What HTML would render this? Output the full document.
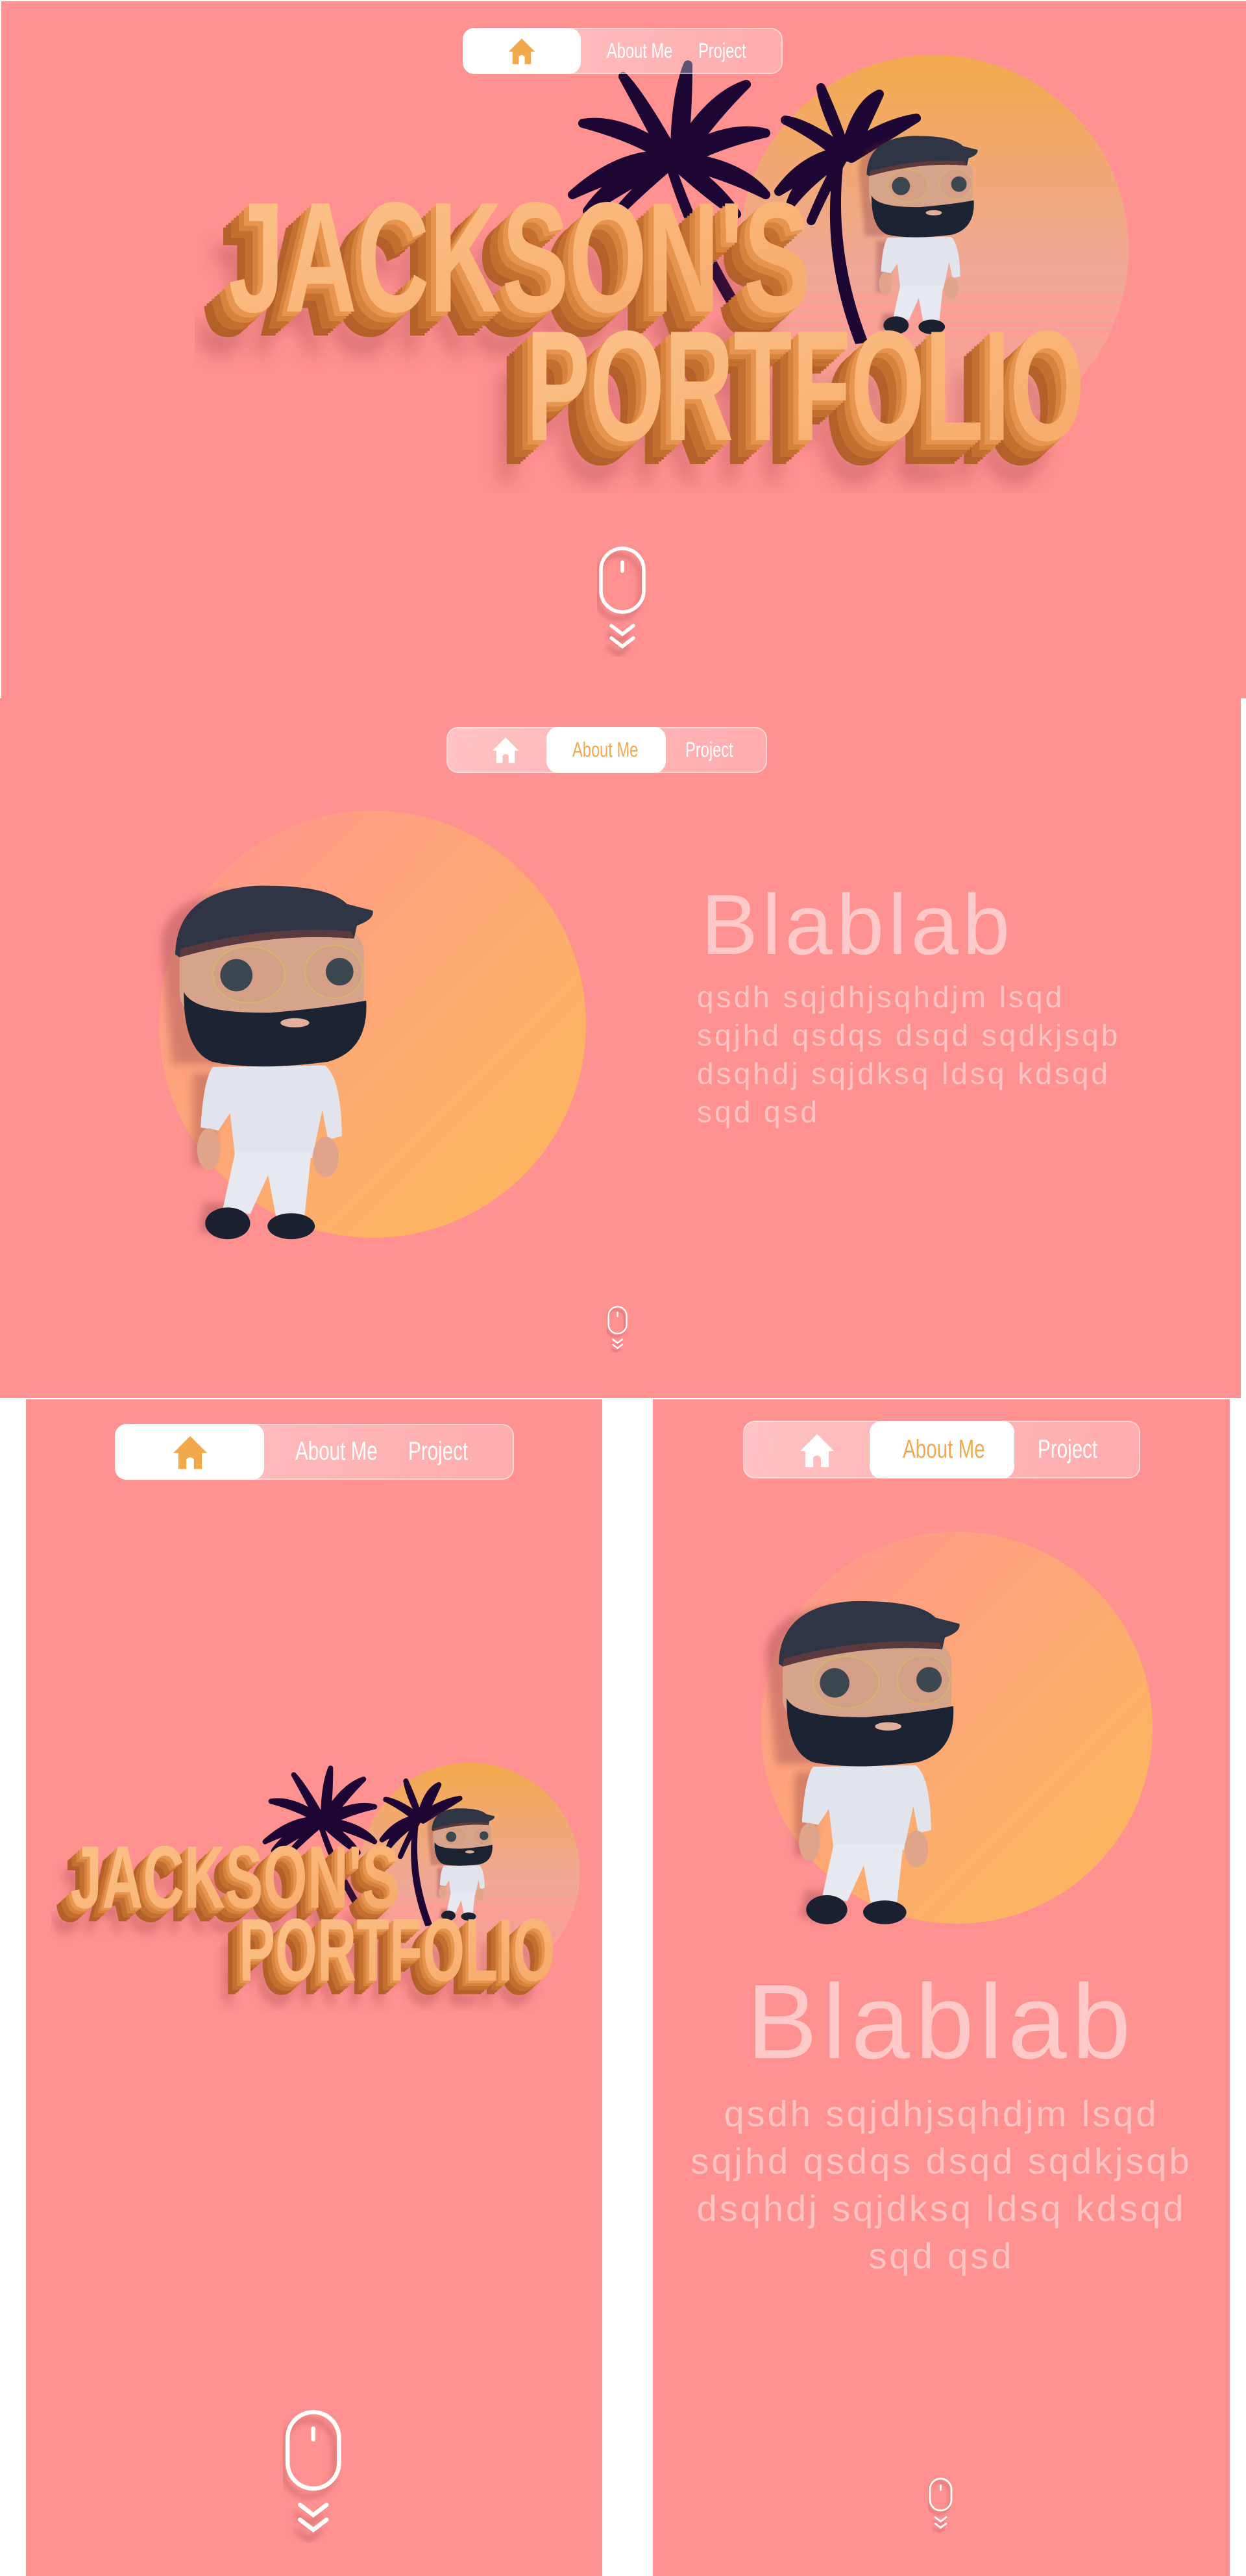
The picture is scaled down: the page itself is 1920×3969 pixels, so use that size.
<!DOCTYPE html>
<html><head><meta charset="utf-8">
<style>
*{margin:0;padding:0;box-sizing:border-box}
html,body{width:1920px;height:3969px;background:#fff;overflow:hidden}
body{position:relative;font-family:"Liberation Sans",sans-serif}
.abs{position:absolute}
.pink{background:#ff9191}
.nav{position:absolute;border:2px solid rgba(255,255,255,.45);background:linear-gradient(100deg,rgba(255,255,255,.45),rgba(255,255,255,.25));border-radius:18px;font-family:"Liberation Sans",sans-serif;color:#fff}
.nav .act{position:absolute;top:-2px;bottom:-2px;background:#fff;border-radius:18px}
.nav span{position:absolute;white-space:nowrap;transform:scaleX(.74);transform-origin:0 0}
.big{color:#ffc9c9;font-weight:300;white-space:nowrap;position:absolute}
.para{color:#ffc3c3;position:absolute;white-space:nowrap}
</style></head><body>
<svg width="0" height="0" style="position:absolute">
<defs>
<linearGradient id="sunG" x1="0" y1="0" x2="0" y2="1"><stop offset="0" stop-color="#f3aa4c"/><stop offset=".55" stop-color="#efa797"/><stop offset="1" stop-color="#ff9a94"/></linearGradient>
<linearGradient id="circG" x1="0" y1="0" x2="1" y2="1"><stop offset="0" stop-color="#ff9692"/><stop offset=".75" stop-color="#fcb264"/><stop offset="1" stop-color="#fdb860"/></linearGradient>
<linearGradient id="faceG" x1="0" y1="0" x2="1" y2="1"><stop offset="0" stop-color="#fdc48c"/><stop offset="1" stop-color="#f5a866"/></linearGradient>
<filter id="bl"><feGaussianBlur stdDeviation="14"/></filter>
<filter id="bl2"><feGaussianBlur stdDeviation="4"/></filter>
<clipPath id="sunClip"><circle cx="1439" cy="385" r="300"/></clipPath>
<symbol id="house" viewBox="0 0 24 24"><path d="M12 2.5 L2.2 12.3 H5.2 V21.5 H9.8 V16 Q12 13.6 14.2 16 V21.5 H18.8 V12.3 H21.8 Z"/></symbol>
<symbol id="mouse" viewBox="0 0 80 170">
<g filter="url(#bl2)" opacity=".35" transform="translate(-6,10)" stroke="#8a3a3a" fill="none" stroke-width="6"><rect x="6" y="3" width="66" height="98" rx="33"/><path d="M22 124 L39 137 L56 124 M22 144 L39 157 L56 144"/></g>
<g stroke="#fff" fill="none" stroke-width="5.5" stroke-linecap="round"><rect x="6" y="3" width="66" height="98" rx="33"/><path d="M39 24 V38"/><path d="M22 122 L39 135 L56 122 M22 141 L39 154 L56 141"/></g>
</symbol>
<symbol id="fig" viewBox="100 260 770 1260">
<g filter="url(#bl)" opacity=".3" fill="#7a2d3a"><path d="M120,480 Q140,310 400,300 L420,900 L160,900 Z"/><path d="M230,930 L330,930 L300,1250 L230,1250 Z"/><path d="M270,1380 L360,1380 L340,1500 L250,1480Z"/></g>
<path d="M300,910 L690,905 Q745,950 748,1150 L700,1162 L680,1060 L645,1225 L378,1225 L360,1070 L320,1130 L258,1120 Q268,955 300,910 Z" fill="#e1e4ec"/>
<ellipse cx="286" cy="1195" rx="40" ry="72" fill="#e0a48a"/>
<ellipse cx="692" cy="1222" rx="45" ry="70" fill="#e0a48a"/>
<path d="M378,1205 L642,1205 L618,1432 L520,1432 L492,1285 L430,1420 L335,1402 Z" fill="#e6e9ef"/>
<ellipse cx="352" cy="1452" rx="78" ry="55" fill="#1b2131"/>
<ellipse cx="572" cy="1462" rx="82" ry="45" fill="#1b2131"/>
<rect x="185" y="420" width="640" height="330" rx="100" fill="#d8a38b"/>
<path d="M170,520 Q175,300 450,282 Q700,278 765,345 L855,368 Q862,398 800,420 L790,465 Q500,440 185,530 Z" fill="#2f3544"/>
<path d="M185,530 Q500,440 790,465 L780,440 Q500,415 190,500 Z" fill="#5a3a3c"/>
<ellipse cx="425" cy="590" rx="125" ry="98" fill="rgba(210,150,130,.35)" stroke="#d6b36c" stroke-width="5"/>
<ellipse cx="720" cy="580" rx="100" ry="92" fill="rgba(210,150,130,.35)" stroke="#d6b36c" stroke-width="5"/>
<circle cx="382" cy="592" r="56" fill="#3d4750"/>
<circle cx="740" cy="580" r="48" fill="#3d4750"/>
<path d="M200,650 Q235,725 500,722 Q700,705 832,680 Q842,852 700,892 Q450,925 298,892 Q198,852 200,650 Z" fill="#1c2434"/>
<ellipse cx="585" cy="757" rx="50" ry="16" fill="#e2b09a"/>
</symbol>
<symbol id="logo" viewBox="300 80 1450 680">
<circle cx="1439" cy="385" r="300" fill="url(#sunG)"/>
<g clip-path="url(#sunClip)" fill="#ff9c98"><rect x="1100" y="455" width="700" height="5"/><rect x="1100" y="470" width="700" height="6"/><rect x="1100" y="484" width="700" height="6"/><rect x="1100" y="497" width="700" height="7"/><rect x="1100" y="510" width="700" height="8"/></g>
<g fill="#1d0634">
<path d="M1036,240 Q1085,390 1180,528 L1160,530 Q1066,395 1022,243 Z"/>
<path d="M1302,232 Q1280,380 1338,528 L1318,530 Q1260,380 1288,232 Z"/>
<g stroke="#1d0634" stroke-width="14" stroke-linejoin="round">
<path d="M1040,240 Q960,230 882,300 Q970,260 1040,250Z"/>
<path d="M1040,240 Q960,180 898,190 Q990,215 1038,252Z"/>
<path d="M1040,240 Q990,150 960,118 Q1000,190 1030,250Z"/>
<path d="M1040,240 Q1040,150 1060,100 Q1060,190 1050,250Z"/>
<path d="M1040,240 Q1090,150 1150,130 Q1090,190 1052,250Z"/>
<path d="M1040,240 Q1120,190 1180,205 Q1110,220 1050,252Z"/>
<path d="M1040,240 Q1140,250 1180,300 Q1120,270 1048,252Z"/>
<path d="M1040,240 Q1110,290 1135,330 Q1090,300 1040,254Z"/>
<path d="M1040,240 Q980,290 945,335 Q990,290 1036,252Z"/>
<path d="M1040,240 Q950,260 905,325 Q975,280 1036,250Z"/>
<path d="M1302,232 Q1240,240 1200,295 Q1250,265 1300,242Z"/>
<path d="M1302,232 Q1245,190 1210,185 Q1260,210 1298,244Z"/>
<path d="M1302,232 Q1270,170 1265,135 Q1290,190 1306,242Z"/>
<path d="M1302,232 Q1320,160 1355,145 Q1330,200 1310,242Z"/>
<path d="M1302,232 Q1360,190 1412,182 Q1360,215 1312,244Z"/>
<path d="M1302,232 Q1270,290 1250,340 Q1275,285 1298,246Z"/>
<path d="M1302,232 Q1230,270 1218,315 Q1250,275 1298,244Z"/>
</g>
</g>
<use href="#fig" x="1318" y="197" width="192" height="328" preserveAspectRatio="none"/>
<g font-family="Liberation Sans Narrow,Liberation Sans,sans-serif" font-weight="bold" font-size="242">
<g filter="url(#bl)" opacity=".35" fill="#8a2f3a"><text x="300" y="545" textLength="897" lengthAdjust="spacingAndGlyphs">JACKSON'S</text><text x="760" y="742" textLength="860" lengthAdjust="spacingAndGlyphs">PORTFOLIO</text></g>
<g fill="#b4602a">
<text x="312" y="517" textLength="897" lengthAdjust="spacingAndGlyphs">JACKSON'S</text><text x="771" y="715" textLength="860" lengthAdjust="spacingAndGlyphs">PORTFOLIO</text>
<text x="316" y="513" textLength="897" lengthAdjust="spacingAndGlyphs">JACKSON'S</text><text x="775" y="711" textLength="860" lengthAdjust="spacingAndGlyphs">PORTFOLIO</text>
<text x="320" y="510" textLength="897" lengthAdjust="spacingAndGlyphs">JACKSON'S</text><text x="779" y="708" textLength="860" lengthAdjust="spacingAndGlyphs">PORTFOLIO</text>
</g>
<g fill="#c46e30">
<text x="324" y="506" textLength="897" lengthAdjust="spacingAndGlyphs">JACKSON'S</text><text x="783" y="704" textLength="860" lengthAdjust="spacingAndGlyphs">PORTFOLIO</text>
<text x="328" y="502" textLength="897" lengthAdjust="spacingAndGlyphs">JACKSON'S</text><text x="787" y="700" textLength="860" lengthAdjust="spacingAndGlyphs">PORTFOLIO</text>
<text x="332" y="499" textLength="897" lengthAdjust="spacingAndGlyphs">JACKSON'S</text><text x="791" y="697" textLength="860" lengthAdjust="spacingAndGlyphs">PORTFOLIO</text>
</g>
<g fill="#d6833e">
<text x="336" y="495" textLength="897" lengthAdjust="spacingAndGlyphs">JACKSON'S</text><text x="795" y="693" textLength="860" lengthAdjust="spacingAndGlyphs">PORTFOLIO</text>
<text x="340" y="491" textLength="897" lengthAdjust="spacingAndGlyphs">JACKSON'S</text><text x="799" y="689" textLength="860" lengthAdjust="spacingAndGlyphs">PORTFOLIO</text>
</g>
<g fill="#e6944e">
<text x="344" y="487" textLength="897" lengthAdjust="spacingAndGlyphs">JACKSON'S</text><text x="803" y="685" textLength="860" lengthAdjust="spacingAndGlyphs">PORTFOLIO</text>
<text x="348" y="484" textLength="897" lengthAdjust="spacingAndGlyphs">JACKSON'S</text><text x="807" y="682" textLength="860" lengthAdjust="spacingAndGlyphs">PORTFOLIO</text>
</g>
<g fill="url(#faceG)"><text x="352" y="480" textLength="897" lengthAdjust="spacingAndGlyphs">JACKSON'S</text><text x="811" y="678" textLength="860" lengthAdjust="spacingAndGlyphs">PORTFOLIO</text></g>
</g>
</symbol>
</defs>
</svg>

<!-- Section 1 -->
<div class="abs pink" style="left:0;top:0;width:1920px;height:1076px;border-top:2px solid #fff;border-left:2px solid #fff"></div>
<svg class="abs" style="left:300px;top:80px" width="1450" height="680"><use href="#logo" width="1450" height="680"/></svg>
<div class="nav" style="left:713px;top:43px;width:493px;height:71px;font-size:32px">
<div class="act" style="left:-2px;width:182px"></div>
<svg class="abs" style="left:64px;top:9px" width="50" height="50" fill="#f2a94c"><use href="#house"/></svg>
<span style="left:220px;top:15px">About Me</span>
<span style="left:361px;top:15px">Project</span>
</div>
<svg class="abs" style="left:920px;top:842px" width="80" height="170"><use href="#mouse"/></svg>

<!-- Section 2 -->
<div class="abs pink" style="left:0;top:1076px;width:1912px;height:1078px"></div>
<svg class="abs" style="left:245px;top:1249px" width="658" height="658"><circle cx="329" cy="329" r="329" fill="url(#circG)"/></svg>
<svg class="abs" style="left:215px;top:1355px" width="390" height="560"><use href="#fig" width="390" height="560" preserveAspectRatio="none"/></svg>
<div class="nav" style="left:688px;top:1120px;width:494px;height:71px;font-size:32px">
<div class="act" style="left:152px;width:184px"></div>
<svg class="abs" style="left:64px;top:9px" width="50" height="50" fill="#fff"><use href="#house"/></svg>
<span style="left:192px;top:15px;color:#f2a94c">About Me</span>
<span style="left:366px;top:15px">Project</span>
</div>
<div class="big" style="left:1080px;top:1350px;font-size:132px;letter-spacing:6px;line-height:150px">Blablab</div>
<div class="para" style="left:1074px;top:1507px;font-size:46px;line-height:59px;letter-spacing:4px">qsdh sqjdhjsqhdjm lsqd<br>sqjhd qsdqs dsqd sqdkjsqb<br>dsqhdj sqjdksq ldsq kdsqd<br>sqd qsd</div>
<svg class="abs" style="left:935px;top:2012px" width="34" height="72"><use href="#mouse" width="34" height="72"/></svg>

<!-- Mobile left -->
<div class="abs pink" style="left:40px;top:2156px;width:888px;height:1813px"></div>
<svg class="abs" style="left:79px;top:2713px" width="821" height="385"><use href="#logo" width="821" height="385"/></svg>
<div class="nav" style="left:177px;top:2194px;width:615px;height:86px;font-size:40px">
<div class="act" style="left:-2px;width:230px"></div>
<svg class="abs" style="left:82px;top:10px" width="64" height="64" fill="#f2a94c"><use href="#house"/></svg>
<span style="left:276px;top:18px">About Me</span>
<span style="left:450px;top:18px">Project</span>
</div>
<svg class="abs" style="left:436px;top:3712px" width="96" height="206"><use href="#mouse" width="96" height="206"/></svg>

<!-- Mobile right -->
<div class="abs pink" style="left:1006px;top:2156px;width:889px;height:1813px"></div>
<svg class="abs" style="left:1172px;top:2360px" width="604" height="604"><circle cx="302" cy="302" r="302" fill="url(#circG)"/></svg>
<svg class="abs" style="left:1150px;top:2458px" width="356" height="512"><use href="#fig" width="356" height="512" preserveAspectRatio="none"/></svg>
<div class="nav" style="left:1145px;top:2189px;width:612px;height:89px;font-size:40px">
<div class="act" style="left:193px;width:223px"></div>
<svg class="abs" style="left:80px;top:12px" width="64" height="64" fill="#fff"><use href="#house"/></svg>
<span style="left:244px;top:20px;color:#f2a94c">About Me</span>
<span style="left:452px;top:20px">Project</span>
</div>
<div class="big" style="left:1006px;width:889px;text-align:center;top:3025px;font-size:163px;letter-spacing:8px;line-height:180px">Blablab</div>
<div class="para" style="left:1006px;width:889px;text-align:center;top:3220px;font-size:56px;line-height:73px;letter-spacing:4px">qsdh sqjdhjsqhdjm lsqd<br>sqjhd qsdqs dsqd sqdkjsqb<br>dsqhdj sqjdksq ldsq kdsqd<br>sqd qsd</div>
<svg class="abs" style="left:1430px;top:3817px" width="40" height="86"><use href="#mouse" width="40" height="86"/></svg>
</body></html>
